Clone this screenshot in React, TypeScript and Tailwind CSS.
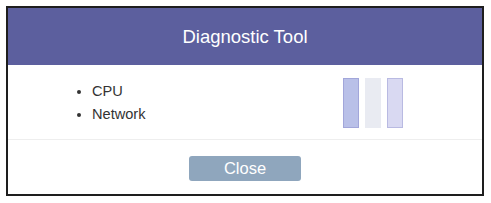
import React from 'react';

export default function App() {
  return (
    <div className="w-[491px] h-[203px] bg-white pt-[6px] pl-[6px]" style={{ fontFamily: '"Liberation Sans", Arial, sans-serif' }}>
      <div className="w-[478px] h-[190px] border-2 border-[#1e1e1e] flex flex-col bg-white">
        {/* header */}
        <div className="h-[57px] bg-[#5c5f9e] flex items-center justify-center">
          <span className="text-white text-[18.5px] pt-[1px]">Diagnostic Tool</span>
        </div>

        {/* body */}
        <div className="h-[75px] border-b border-[#eeeeee] flex items-center">
          <ul className="list-disc pl-[84px] pt-[2px] text-[14.6px] text-[#333] leading-[23px] w-[335px]">
            <li>CPU</li>
            <li>Network</li>
          </ul>
          <div className="flex gap-[6px] items-center pt-[1px]">
            <div className="w-[16px] h-[50px] bg-[#b9c0e8] border border-[#a2a6da]" />
            <div className="w-[16px] h-[50px] bg-[#e9ebf2]" />
            <div className="w-[16px] h-[50px] bg-[#d9d9f2] border border-[#b9bae2]" />
          </div>
        </div>

        {/* footer */}
        <div className="flex-1 flex items-center justify-center pt-[3px]">
          <button className="w-[112px] h-[25px] rounded-[3px] bg-[#8fa6bd] text-white text-[16.5px] leading-none">
            Close
          </button>
        </div>
      </div>
    </div>
  );
}
